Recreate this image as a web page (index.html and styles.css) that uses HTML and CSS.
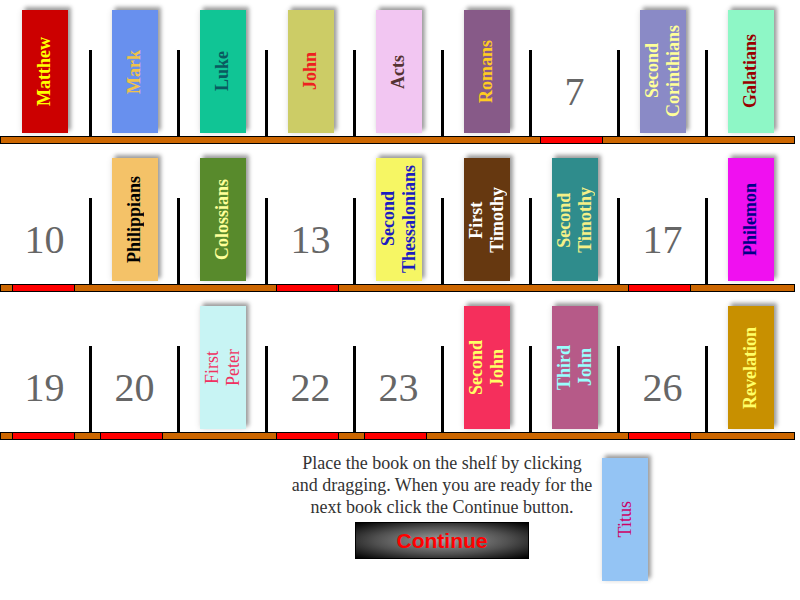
FILE: index.html
```html
<!DOCTYPE html>
<html lang="en">
<head>
    <meta charset="UTF-8">
    <title>Books of the New Testament</title>
    <link rel="stylesheet" href="styles.css">
</head>
<body>
    <div class="row first">
        <div class="slot"><div class="book matthew"><span>Matthew</span></div></div>
        <div class="post"></div>
        <div class="slot"><div class="book mark"><span>Mark</span></div></div>
        <div class="post"></div>
        <div class="slot"><div class="book luke"><span>Luke</span></div></div>
        <div class="post"></div>
        <div class="slot"><div class="book john"><span>John</span></div></div>
        <div class="post"></div>
        <div class="slot"><div class="book acts"><span>Acts</span></div></div>
        <div class="post"></div>
        <div class="slot"><div class="book romans"><span>Romans</span></div></div>
        <div class="post"></div>
        <div class="slot"><div class="num">7</div></div>
        <div class="post"></div>
        <div class="slot"><div class="book corinthians"><span>Second<br>Corinthians</span></div></div>
        <div class="post"></div>
        <div class="slot"><div class="book galatians"><span>Galatians</span></div></div>
    </div>
    <div class="shelf">
        <div></div><div></div><div></div><div></div><div></div><div></div>
        <div class="gap"></div>
        <div></div><div></div>
    </div>

    <div class="row">
        <div class="slot"><div class="num">10</div></div>
        <div class="post"></div>
        <div class="slot"><div class="book philippians"><span>Philippians</span></div></div>
        <div class="post"></div>
        <div class="slot"><div class="book colossians"><span>Colossians</span></div></div>
        <div class="post"></div>
        <div class="slot"><div class="num">13</div></div>
        <div class="post"></div>
        <div class="slot"><div class="book thessalonians"><span>Second<br>Thessalonians</span></div></div>
        <div class="post"></div>
        <div class="slot"><div class="book timothy1"><span>First<br>Timothy</span></div></div>
        <div class="post"></div>
        <div class="slot"><div class="book timothy2"><span>Second<br>Timothy</span></div></div>
        <div class="post"></div>
        <div class="slot"><div class="num">17</div></div>
        <div class="post"></div>
        <div class="slot"><div class="book philemon"><span>Philemon</span></div></div>
    </div>
    <div class="shelf">
        <div class="gap"></div>
        <div></div><div></div>
        <div class="gap"></div>
        <div></div><div></div><div></div>
        <div class="gap"></div>
        <div></div>
    </div>

    <div class="row">
        <div class="slot"><div class="num">19</div></div>
        <div class="post"></div>
        <div class="slot"><div class="num">20</div></div>
        <div class="post"></div>
        <div class="slot"><div class="book peter"><span>First<br>Peter</span></div></div>
        <div class="post"></div>
        <div class="slot"><div class="num">22</div></div>
        <div class="post"></div>
        <div class="slot"><div class="num">23</div></div>
        <div class="post"></div>
        <div class="slot"><div class="book john2"><span>Second<br>John</span></div></div>
        <div class="post"></div>
        <div class="slot"><div class="book john3"><span>Third<br>John</span></div></div>
        <div class="post"></div>
        <div class="slot"><div class="num">26</div></div>
        <div class="post"></div>
        <div class="slot"><div class="book revelation"><span>Revelation</span></div></div>
    </div>
    <div class="shelf">
        <div class="gap"></div>
        <div class="gap"></div>
        <div></div>
        <div class="gap"></div>
        <div class="gap"></div>
        <div></div><div></div>
        <div class="gap"></div>
        <div></div>
    </div>

    <div class="tray">
        <div class="note">
            <p>Place the book on the shelf by clicking and dragging. When you are ready for the next book click the Continue button.</p>
            <button type="button" class="continue">Continue</button>
        </div>
        <div class="book titus"><span>Titus</span></div>
    </div>
</body>
</html>
```

FILE: styles.css
```css
body {
    margin: 0;
    background-color: #fff;
    font-family: "Liberation Serif", "Times New Roman", serif;
}

.row {
    display: grid;
    grid-template-columns: 89px 3px repeat(7, 85px 3px) 85px;
    align-items: end;
    height: 140px;
}

.row.first {
    height: 136px;
}

.slot {
    display: flex;
    justify-content: center;
    align-items: flex-end;
    height: 100%;
}

.post {
    height: 86px;
    background-color: #000;
}

.num {
    font-size: 40px;
    line-height: 40px;
    color: #666;
    margin-bottom: 24px;
}

.shelf {
    display: grid;
    grid-template-columns: repeat(9, 88px);
    box-sizing: border-box;
    width: 795px;
    height: 8px;
    padding-left: 3px;
    border: 1px solid #000;
    background-color: #cc6600;
}

.shelf .gap {
    box-sizing: border-box;
    width: 63px;
    margin-left: 8px;
    border-left: 1px solid #000;
    border-right: 1px solid #000;
    background-color: #ff0000;
}

.book {
    display: flex;
    justify-content: center;
    align-items: center;
    width: 46px;
    height: 123px;
    margin-bottom: 3px;
    box-shadow: 3px -3px 4px rgba(0, 0, 0, 0.35), 0 0 6px rgba(0, 0, 0, 0.12);
}

.book span {
    writing-mode: vertical-rl;
    transform: rotate(180deg);
    text-align: center;
    font-size: 18px;
    line-height: 21px;
    font-weight: bold;
    white-space: nowrap;
}

.matthew { background-color: #cc0000; color: #ffff00; }
.mark { background-color: #6890ee; color: #f0c24a; }
.luke { background-color: #10c595; color: #0a5a60; }
.john { background-color: #cccc66; color: #ee2020; }
.acts { background-color: #f2c6f2; color: #553333; }
.romans { background-color: #875a88; color: #ffcc22; }
.corinthians { background-color: #8a8ac6; color: #ffff99; }
.galatians { background-color: #8ef7c6; color: #990000; }

.philippians { background-color: #f4c268; color: #000; }
.colossians { background-color: #588a2c; color: #ffff99; }
.thessalonians { background-color: #f6f664; color: #1c1cc0; }
.timothy1 { background-color: #663810; color: #fff; }
.timothy2 { background-color: #2f8c8c; color: #f4f088; }
.philemon { background-color: #f010f0; color: #000088; }

.peter { background-color: #c8f4f4; color: #f03060; }
.peter span { font-weight: normal; }
.john2 { background-color: #f52f5c; color: #ffff66; }
.john3 { background-color: #b65a88; color: #99ffff; }
.revelation { background-color: #c89000; color: #ffff66; }

.tray {
    display: flex;
    align-items: flex-start;
    padding-left: 282px;
}

.note {
    width: 320px;
    text-align: center;
}

.note p {
    margin: 12px 8px 4px;
    font-size: 18px;
    line-height: 22px;
    color: #333;
}

.continue {
    width: 174px;
    height: 37px;
    padding: 0;
    border: 1px solid #000;
    background: radial-gradient(ellipse at center, #a0a0a0 0%, #505050 55%, #000 100%);
    color: #ff0000;
    font-family: "Liberation Sans", Arial, sans-serif;
    font-weight: bold;
    font-size: 21px;
    cursor: pointer;
}

.titus {
    margin-top: 18px;
    background-color: #94c4f4;
    color: #cc0066;
}

.titus span {
    font-weight: normal;
}
```
